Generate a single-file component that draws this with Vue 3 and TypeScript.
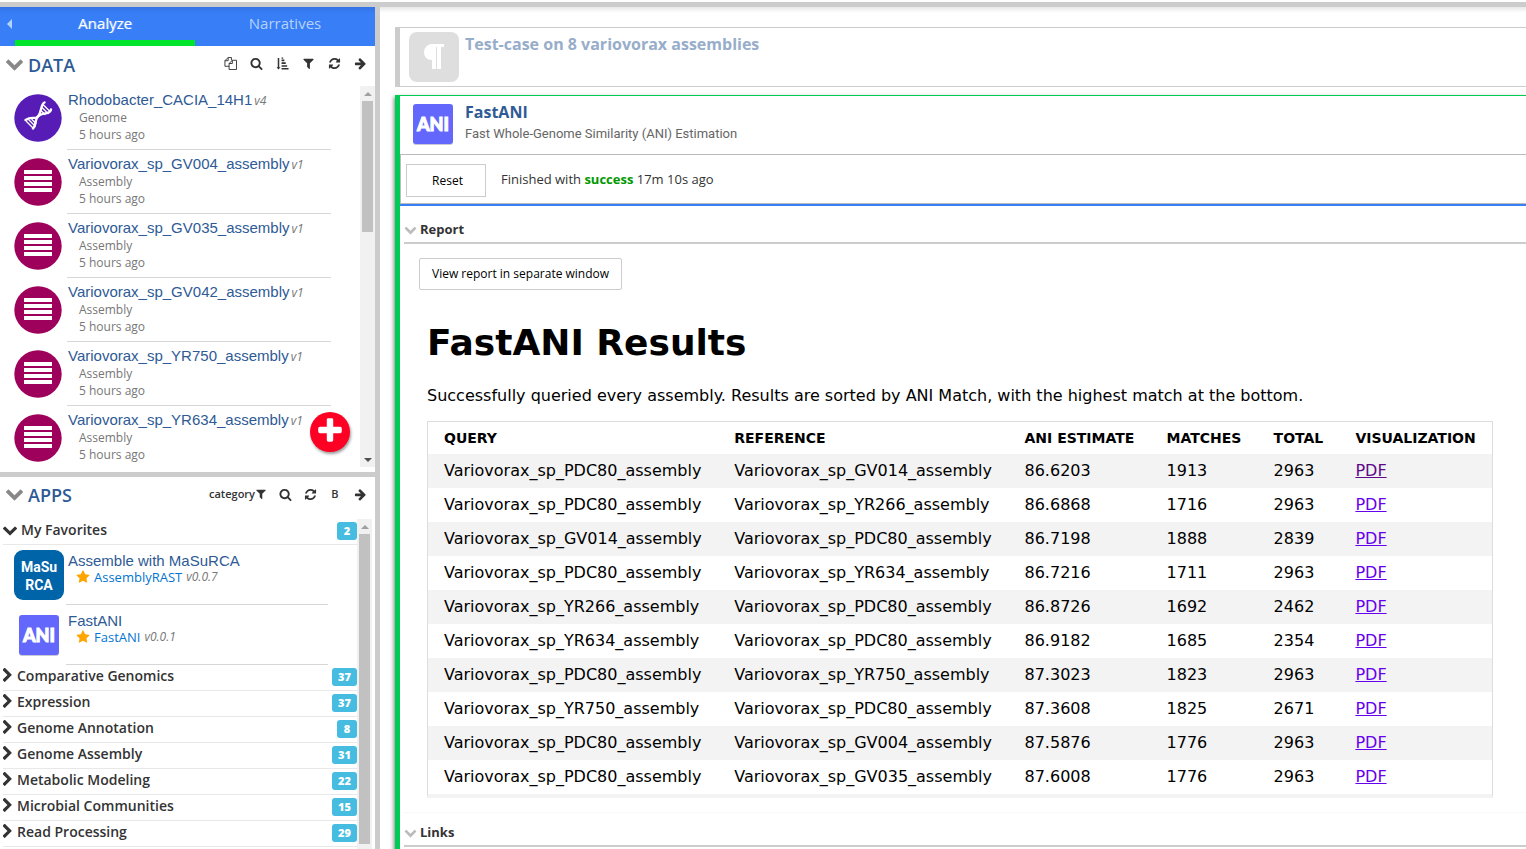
<script setup lang="ts">
import { ref } from 'vue'

interface DataItem { name: string; version: string; type: string; age: string }
interface AppItem { name: string; module: string; version: string; logo: 'masurca' | 'ani' }
interface Category { name: string; count: number }
interface Match { query: string; reference: string; ani: string; matches: number; total: number; visited?: boolean }

const assembly = (strain: string): DataItem => ({
  name: `Variovorax_sp_${strain}_assembly`, version: 'v1', type: 'Assembly', age: '5 hours ago',
})

const dataItems: DataItem[] = [
  { name: 'Rhodobacter_CACIA_14H1', version: 'v4', type: 'Genome', age: '5 hours ago' },
  ...['GV004', 'GV035', 'GV042', 'YR750', 'YR634'].map(assembly),
]

const favorites: AppItem[] = [
  { name: 'Assemble with MaSuRCA', module: 'AssemblyRAST', version: 'v0.0.7', logo: 'masurca' },
  { name: 'FastANI', module: 'FastANI', version: 'v0.0.1', logo: 'ani' },
]

const categories: Category[] = [
  { name: 'Comparative Genomics', count: 37 },
  { name: 'Expression', count: 37 },
  { name: 'Genome Annotation', count: 8 },
  { name: 'Genome Assembly', count: 31 },
  { name: 'Metabolic Modeling', count: 22 },
  { name: 'Microbial Communities', count: 15 },
  { name: 'Read Processing', count: 29 },
]

const match = (q: string, r: string, ani: string, matches: number, total: number, visited = false): Match => ({
  query: `Variovorax_sp_${q}_assembly`, reference: `Variovorax_sp_${r}_assembly`, ani, matches, total, visited,
})

const results: Match[] = [
  match('PDC80', 'GV014', '86.6203', 1913, 2963, true),
  match('PDC80', 'YR266', '86.6868', 1716, 2963),
  match('GV014', 'PDC80', '86.7198', 1888, 2839),
  match('PDC80', 'YR634', '86.7216', 1711, 2963),
  match('YR266', 'PDC80', '86.8726', 1692, 2462),
  match('YR634', 'PDC80', '86.9182', 1685, 2354),
  match('PDC80', 'YR750', '87.3023', 1823, 2963),
  match('YR750', 'PDC80', '87.3608', 1825, 2671),
  match('PDC80', 'GV004', '87.5876', 1776, 2963),
  match('PDC80', 'GV035', '87.6008', 1776, 2963),
]

const columns = ['Query', 'Reference', 'ANI Estimate', 'Matches', 'Total', 'Visualization']
const tab = ref<'analyze' | 'narratives'>('analyze')

const icons = {
  search: 'M1216 832q0-185-131.5-316.5t-316.5-131.5-316.5 131.5-131.5 316.5 131.5 316.5 316.5 131.5 316.5-131.5 131.5-316.5zm512 832q0 52-38 90t-90 38q-54 0-90-38l-343-342q-179 124-399 124-143 0-273.5-55.5t-225-150-150-225-55.5-273.5 55.5-273.5 150-225 225-150 273.5-55.5 273.5 55.5 225 150 150 225 55.5 273.5q0 220-124 399l343 343q37 37 37 90z',
  filter: 'M1595 295q17 41-14 70l-493 493v742q0 42-39 59-13 5-25 5-27 0-45-19l-256-256q-19-19-19-45v-486l-493-493q-31-29-14-70 17-39 59-39h1280q42 0 59 39z',
  refresh: 'M1639 1056q0 5-1 7-64 268-268 434.5t-478 166.5q-146 0-282.5-55t-243.5-157l-129 129q-19 19-45 19t-45-19-19-45v-448q0-26 19-45t45-19h448q26 0 45 19t19 45-19 45l-137 137q71 66 161 102t187 36q134 0 250-65t186-179q11-17 53-117 8-23 30-23h192q13 0 22.5 9.5t9.5 22.5zm25-800v448q0 26-19 45t-45 19h-448q-26 0-45-19t-19-45 19-45l138-138q-148-137-349-137-134 0-250 65t-186 179q-11 17-53 117-8 23-30 23h-199q-13 0-22.5-9.5t-9.5-22.5v-7q65-268 270-434.5t480-166.5q146 0 284 55.5t245 156.5l130-129q19-19 45-19t45 19 19 45z',
  arrow: 'M1600 960q0 54-37 91l-651 651q-39 37-91 37-51 0-90-37l-75-75q-38-38-38-91t38-91l293-293h-704q-52 0-84.5-37.5t-32.5-90.5v-128q0-53 32.5-90.5t84.5-37.5h704l-293-294q-38-36-38-90t38-90l75-75q38-38 90-38 53 0 91 38l651 651q37 35 37 90z',
  sort: 'M64 1408h176v-1280h208v1280h176l-280 320zM768 1504h960v224h-960zM768 1120h768v224h-768zM768 736h576v224h-576zM768 352h384v224h-384zM768 64h224v160h-224z',
  star: 'M1728 647q0 22-26 48l-363 354 86 500q1 7 1 20 0 21-10.5 35.5t-30.5 14.5q-19 0-40-12l-449-236-449 236q-22 12-40 12-21 0-31.5-14.5t-10.5-35.5q0-6 2-20l86-500-364-354q-25-27-25-48 0-37 56-46l502-73 225-455q19-41 49-41t49 41l225 455 502 73q56 9 56 46z',
  plus: 'M1600 736v192q0 40-28 68t-68 28h-416v416q0 40-28 68t-68 28h-192q-40 0-68-28t-28-68v-416h-416q-40 0-68-28t-28-68v-192q0-40 28-68t68-28h416v-416q0-40 28-68t68-28h192q40 0 68 28t28 68v416h416q40 0 68 28t28 68z',
  down: 'M1683 808l-742 741q-19 19-45 19t-45-19l-742-741q-19-19-19-45.5t19-45.5l166-165q19-19 45-19t45 19l531 531 531-531q19-19 45-19t45 19l166 165q19 19 19 45.5t-19 45.5z',
  right: 'M1363 877l-742 742q-19 19-45 19t-45-19l-166-166q-19-19-19-45t19-45l531-531-531-531q-19-19-19-45t19-45l166-166q19-19 45-19t45 19l742 742q19 19 19 45t-19 45z',
}
</script>

<template>
  <div class="page">
    <div class="topbar"></div>
    <div class="workspace">
      <aside class="side">
        <nav class="tabs">
          <button class="collapse" aria-label="Collapse panel">
            <svg width="5" height="10" viewBox="0 0 5 10"><path d="M5 0v10L0 5z" /></svg>
          </button>
          <button class="tab" :class="{ active: tab === 'analyze' }" @click="tab = 'analyze'">Analyze</button>
          <button class="tab" :class="{ active: tab === 'narratives' }" @click="tab = 'narratives'">Narratives</button>
        </nav>

        <section class="panel data">
          <header class="panel-head">
            <svg class="fold" viewBox="90 500 1612 1100"><path :d="icons.down" /></svg>
            <h2>DATA</h2>
            <div class="tools">
              <button aria-label="Copy">
                <svg viewBox="0 0 14 14" class="outline"><path d="M8 3.500V.500H4.500L1 4v6h4.500M4.500.500V4H1M9 3.500h4.500v10h-8V7zM9 3.500V7H5.500" /></svg>
              </button>
              <button aria-label="Search"><svg viewBox="0 0 1792 1792"><path :d="icons.search" /></svg></button>
              <button aria-label="Sort"><svg viewBox="0 0 1792 1792"><path :d="icons.sort" /></svg></button>
              <button aria-label="Filter"><svg viewBox="0 0 1792 1792"><path :d="icons.filter" /></svg></button>
              <button aria-label="Refresh"><svg viewBox="0 0 1792 1792"><path :d="icons.refresh" /></svg></button>
              <button aria-label="Expand"><svg viewBox="0 0 1792 1792"><path :d="icons.arrow" /></svg></button>
            </div>
          </header>
          <div class="scroller">
            <ul class="list">
              <li v-for="item in dataItems" :key="item.name" class="item">
                <svg v-if="item.type === 'Genome'" class="disc" viewBox="0 0 48 48">
                  <circle cx="24" cy="24" r="23.700" fill="#561cb5" />
                  <g fill="none" stroke="#fff" stroke-linecap="round">
                    <path d="M11.500 26C19 21 22 27 25 21S27 10 30.500 8.500" stroke-width="2.400" />
                    <path d="M19 34.500C23 31 20 25 25 21.500S36 21 37 15.500" stroke-width="2.400" />
                    <path d="M12.500 27.500l6 6M15 26l6 6M18 25.500l4 4M28 13.500l6 6M29.500 11l6 6M27.500 17l3.500 3.500" stroke-width="1.300" />
                  </g>
                </svg>
                <svg v-else class="disc" viewBox="0 0 48 48">
                  <circle cx="24" cy="24" r="23.700" fill="#9e015c" />
                  <path d="M10 12h28v4H10zM10 18h28v4H10zM10 24h28v4H10zM10 30h28v4H10z" fill="#fff" />
                </svg>
                <div class="info">
                  <div class="name"><a href="#">{{ item.name }}</a><i>{{ item.version }}</i></div>
                  <div class="meta">{{ item.type }}</div>
                  <div class="meta">{{ item.age }}</div>
                </div>
              </li>
            </ul>
            <div class="scrollbar">
              <span class="arrow up"></span>
              <span class="thumb short"></span>
              <span class="arrow down"></span>
            </div>
            <button class="add" aria-label="Add data"><svg viewBox="0 0 1792 1792"><path :d="icons.plus" /></svg></button>
          </div>
        </section>

        <section class="panel apps">
          <header class="panel-head">
            <svg class="fold" viewBox="90 500 1612 1100"><path :d="icons.down" /></svg>
            <h2>APPS</h2>
            <div class="tools">
              <button class="category">category<svg viewBox="0 0 1792 1792"><path :d="icons.filter" /></svg></button>
              <button aria-label="Search"><svg viewBox="0 0 1792 1792"><path :d="icons.search" /></svg></button>
              <button aria-label="Refresh"><svg viewBox="0 0 1792 1792"><path :d="icons.refresh" /></svg></button>
              <button>B</button>
              <button aria-label="Expand"><svg viewBox="0 0 1792 1792"><path :d="icons.arrow" /></svg></button>
            </div>
          </header>
          <div class="scroller">
            <div class="catalog">
              <button class="cat open">
                <svg viewBox="90 500 1612 1100"><path :d="icons.down" /></svg>
                <span>My Favorites</span><b class="badge">2</b>
              </button>
              <div v-for="app in favorites" :key="app.name" class="app">
                <svg v-if="app.logo === 'masurca'" class="logo" viewBox="0 0 50 50">
                  <rect width="50" height="50" rx="9" fill="#0064a8" />
                  <text x="25" y="22" class="masurca">MaSu</text>
                  <text x="25" y="40" class="masurca">RCA</text>
                </svg>
                <svg v-else class="logo" viewBox="0 0 50 50">
                  <rect x="5" y="6" width="40" height="40" rx="3" fill="#c9c9d6" />
                  <rect x="5" y="5" width="40" height="40" rx="3" fill="#6367fb" />
                  <text x="25" y="32" class="ani">ANI</text>
                </svg>
                <div class="info">
                  <div class="name"><a href="#">{{ app.name }}</a></div>
                  <div class="module">
                    <svg viewBox="0 0 1792 1792"><path :d="icons.star" /></svg>
                    <a href="#">{{ app.module }}</a> <i>{{ app.version }}</i>
                  </div>
                </div>
              </div>
              <button v-for="cat in categories" :key="cat.name" class="cat">
                <svg viewBox="400 40 1000 1610"><path :d="icons.right" /></svg>
                <span>{{ cat.name }}</span><b class="badge">{{ cat.count }}</b>
              </button>
            </div>
            <div class="scrollbar">
              <span class="arrow up"></span>
              <span class="thumb long"></span>
            </div>
          </div>
        </section>
      </aside>

      <main class="narrative">
        <article class="cell note">
          <svg class="logo" viewBox="0 0 50 50">
            <rect width="50" height="50" rx="8" fill="#dedede" />
            <path d="M35 12H23.500a8 8 0 0 0-8.500 8c0 5 3 8 8 8v9h4V15h1v22h4V15h3z" fill="#fff" />
          </svg>
          <h3>Test-case on 8 variovorax assemblies</h3>
        </article>

        <article class="cell run">
          <header class="cell-head">
            <svg class="logo" viewBox="0 0 50 50">
              <rect x="4" y="5" width="40" height="40" rx="3" fill="#c9c9d6" />
              <rect x="4" y="4" width="40" height="40" rx="3" fill="#6367fb" />
              <text x="24" y="31" class="ani">ANI</text>
            </svg>
            <div>
              <h3>FastANI</h3>
              <p>Fast Whole-Genome Similarity (ANI) Estimation</p>
            </div>
          </header>
          <div class="status">
            <button class="reset">Reset</button>
            <p>Finished with <b>success</b> 17m 10s ago</p>
          </div>
          <section class="block">
            <h4><svg viewBox="0 0 1792 1792"><path :d="icons.down" /></svg>Report</h4>
            <div class="report">
              <button class="view">View report in separate window</button>
              <div class="frame">
                <h1>FastANI Results</h1>
                <p>Successfully queried every assembly. Results are sorted by ANI Match, with the highest match at the bottom.</p>
                <div class="results">
                  <table>
                    <thead>
                      <tr><th v-for="col in columns" :key="col" scope="col">{{ col }}</th></tr>
                    </thead>
                    <tbody>
                      <tr v-for="(r, i) in results" :key="i">
                        <td>{{ r.query }}</td>
                        <td>{{ r.reference }}</td>
                        <td>{{ r.ani }}</td>
                        <td>{{ r.matches }}</td>
                        <td>{{ r.total }}</td>
                        <td><a href="#" :class="{ visited: r.visited }">PDF</a></td>
                      </tr>
                    </tbody>
                  </table>
                </div>
              </div>
            </div>
          </section>
          <section class="block links">
            <h4><svg viewBox="0 0 1792 1792"><path :d="icons.down" /></svg>Links</h4>
          </section>
        </article>
      </main>
    </div>
  </div>
</template>

<style>
body { margin: 0; background: #fff; }
</style>

<style scoped>
.page {
  --ui: "Open Sans", "Noto Sans", sans-serif;
  height: 100vh;
  overflow: hidden;
  display: flex;
  flex-direction: column;
  font-family: var(--ui);
  color: #333;
  background: #fff;
}
h1, h2, h3, h4, p, ul { margin: 0; padding: 0; }
ul { list-style: none; }
button { border: 0; padding: 0; margin: 0; background: none; font-family: inherit; color: inherit; cursor: pointer; }
a { text-decoration: none; }
svg { display: block; flex: none; fill: currentColor; }

.topbar { flex: none; height: 5px; margin-top: 2px; background: #ccc; }
.workspace { flex: 1; min-height: 0; display: flex; }
.side { flex: none; width: 375px; border-right: 5px solid #ccc; display: flex; flex-direction: column; }

.tabs { flex: none; height: 39px; display: flex; background: linear-gradient(#3573e2, #387ef7 6px); color: #b5d2fc; }
.collapse { width: 15px; padding-left: 7px; padding-bottom: 5px; display: flex; align-items: center; }
.tab { flex: 1; font-size: 15px; line-height: 33px; border-bottom: 6px solid transparent; }
.tab.active { color: #fff; border-bottom-color: #00e52c; text-shadow: 1px 0 0 rgba(255, 255, 255, .4); }

.panel { display: flex; flex-direction: column; min-height: 0; }
.data { flex: none; height: 426px; border-bottom: 5px solid #ccc; }
.apps { flex: 1; }
.panel-head { flex: none; height: 38px; padding: 0 8px 2px 6px; display: flex; align-items: center; }
.apps .panel-head { height: 36px; padding-bottom: 6px; }
.fold { width: 17px; height: 12px; color: #888; }
.panel-head h2 { margin-left: 5px; font-size: 18px; line-height: 24px; color: #2e5a95; font-weight: 600; }
.tools { margin-left: auto; display: flex; align-items: center; gap: 12px; padding-bottom: 4px; }
.apps .tools { gap: 11px; padding-bottom: 2px; }
.tools button { min-width: 14px; font-size: 11px; line-height: 14px; font-weight: 600; display: flex; justify-content: center; }
.tools svg { width: 13px; height: 13px; }
.tools .outline { fill: none; stroke: currentColor; }
.tools .category { align-items: center; }
.tools .category svg { width: 12px; height: 12px; }

.scroller { flex: 1; min-height: 0; display: flex; position: relative; }
.data .scroller { flex: none; height: 381px; }
.list { flex: 1; overflow: hidden; }
.item { height: 64px; display: flex; }
.disc { width: 48px; height: 48px; margin: 8px 5px 0 14px; }
.info { flex: 1; margin-right: 29px; padding: 5px 0 0 1px; border-bottom: 1px solid #d6d6d6; }
.item:last-child .info { border-color: transparent; }
.name { font: 15px/17px "Liberation Sans", Arial, sans-serif; }
.name a { color: #2e5a95; }
.name i { margin-left: 2px; font: italic 12px/17px var(--ui); color: #777; }
.meta { padding-left: 11px; font-size: 12px; line-height: 17px; color: #777; }

.scrollbar { flex: none; width: 15px; display: flex; flex-direction: column; align-items: center; background: #f1f1f1; }
.arrow { height: 15px; display: flex; align-items: center; }
.arrow::before { content: ""; border: 4px solid transparent; }
.arrow.up::before { border-top: 0; border-bottom-color: #a0a0a0; }
.arrow.down { margin-top: auto; }
.arrow.down::before { border-bottom: 0; border-top-color: #505050; }
.thumb { width: 11px; background: #c1c1c1; }
.short { height: 131px; }
.long { height: 310px; }

.add {
  position: absolute; right: 25px; bottom: 15px; width: 40px; height: 38px; padding-bottom: 2px; box-sizing: content-box; border-radius: 50%;
  display: flex; align-items: center; justify-content: center;
  background: #fd0023; color: #fff; box-shadow: 1px 2px 3px rgba(0, 0, 0, .4);
}
.add svg { width: 30px; height: 30px; }

.apps .scroller { padding-right: 3px; }
.catalog { flex: 1; min-width: 0; overflow: hidden; }
.cat {
  width: 354px; height: 26px; margin-left: 3px; border-bottom: 1px solid #e8e8e8;
  display: flex; align-items: flex-start; font-size: 14px; line-height: 21px; font-weight: 600;
}
.cat svg { width: 9px; height: 14px; margin: 3px 5px 0 0; }
.cat.open svg { width: 14px; height: 10px; margin: 7px 4px 0 0; }
.badge {
  margin: 3px 0 0 auto; padding: 0 6px; border-radius: 3px;
  background: #46bce1; color: #fff; font-size: 11px; line-height: 18px; min-width: 8px; text-align: center;
}
.app { height: 60px; display: flex; }
.logo { width: 50px; height: 50px; }
.app .logo { margin: 5px 2px 0 14px; }
.app .info { padding: 7px 0 0 2px; }
.module { display: flex; align-items: center; padding-left: 8px; font-size: 12px; line-height: 16px; color: #777; }
.module a { color: #0275d0; margin: 0 4px; font-size: 13px; }
.module svg { width: 14px; height: 14px; color: #ffa500; }
.masurca { font: bold 14px Roboto, sans-serif; text-anchor: middle; fill: #fff; }
.ani { font: 900 18px Lato, sans-serif; text-anchor: middle; fill: #fff; stroke: #fff; stroke-width: 1px; }

.narrative { flex: 1; min-width: 0; padding: 20px 0 0 15px; overflow: hidden; background: linear-gradient(#e8e8e8, #fff 6px); }
.cell { border-left: 5px solid #ccc; }
.cell h3 { font-size: 16px; line-height: 22px; font-weight: 700; color: #2e5a95; }
.note { height: 58px; padding: 0 9px; display: flex; gap: 6px; border-top: 1px solid #ccc; border-bottom: 1px solid #ccc; }
.note .logo { margin-top: 4px; }
.note .logo + h3 { margin-top: 5px; color: #97adca; }
.run { margin-top: 8px; padding-bottom: 40px; border-left-color: #0c5; border-top: 1px solid #0c5; box-shadow: -1px 2px 4px rgba(0, 0, 0, .5); background: #fff; }
.cell-head { height: 58px; padding-left: 9px; display: flex; gap: 6px; }
.cell-head .logo { margin-top: 4px; }
.cell-head h3 { margin-top: 5px; }
.cell-head p { font: 13px/22px Roboto, sans-serif; color: #666; }
.status {
  height: 48px; display: flex; align-items: center; padding-left: 5px; gap: 15px;
  border: 1px solid #bbb; border-right: 0; font-size: 13px;
}
.status b { color: #090; font-weight: 700; }
.status p { padding-bottom: 1px; }
.reset { width: 80px; height: 33px; margin-top: 3px; border: 1px solid #ccc; font-size: 12px; padding-left: 3px; color: #000; }
.block { margin-left: 4px; }
.block:first-of-type { margin: 0; padding-left: 4px; border-top: 2px solid #387ef7; }
.block h4 { display: flex; align-items: center; gap: 3px; height: 20px; padding: 13px 0 3px; border-bottom: 2px solid #ccc; font-size: 13px; line-height: 14px; }
.block h4 svg { width: 13px; height: 13px; color: #bbb; }
.report { padding: 14px 15px; }
.view { height: 32px; padding: 0 12px 2px; border: 1px solid #ccc; border-radius: 2px; font-size: 12px; color: #000; display: block; }
.frame { margin: 0 8px; color: #000; font-family: "DejaVu Sans", sans-serif; }
.frame h1 { padding-top: 29px; font-size: 36px; line-height: 48px; }
.frame p { padding: 19px 0 15px; font-size: 16px; line-height: 20px; }
.results { display: inline-block; border: 1px solid #ddd; border-bottom: 4px solid #f3f3f3; vertical-align: top; }
table { width: 1064px; border-collapse: collapse; }
th { height: 32px; padding: 0 16px; font-size: 14px; text-align: left; text-transform: uppercase; }
td { height: 32px; padding: 0 16px 2px; font-size: 16px; }
tbody tr:nth-child(odd) { background: #f3f3f3; }
td a { color: #60e; text-decoration: underline; }
td a.visited { color: #60088a; }
.links { border-top: 1px solid #f8f8f8; }
.links h4 { padding-top: 9px; }
</style>
